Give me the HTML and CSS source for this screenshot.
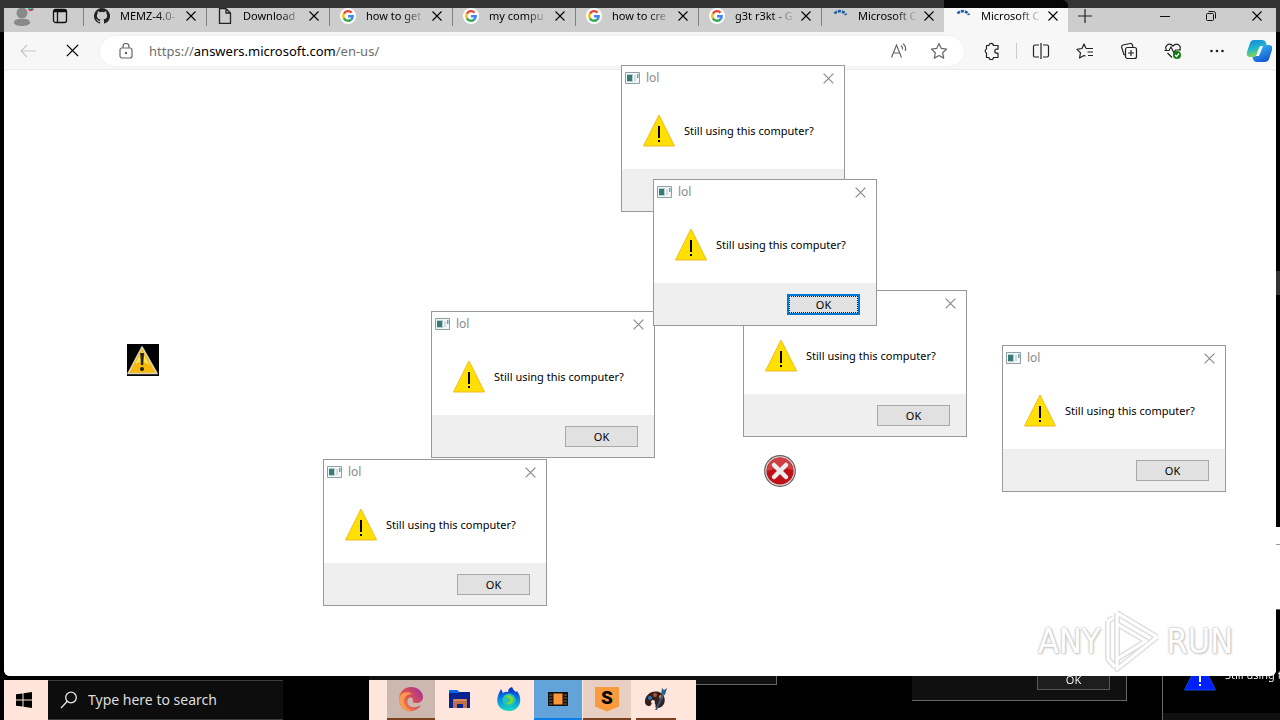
FILE: index.html
```html
<!DOCTYPE html>
<html lang="en">
<head>
<meta charset="utf-8">
<title>Desktop</title>
<link rel="stylesheet" href="styles.css">
</head>
<body>
<svg class="defs" aria-hidden="true">
  <symbol id="x" viewBox="0 0 12 12"><path d="M1.500 1.500l9 9M10.500 1.500l-9 9" fill="none" stroke="currentColor" stroke-width="1.100"/></symbol>
  <symbol id="google" viewBox="0 0 16 16"><circle cx="8" cy="8" r="8" fill="#fff"/><g fill="none" stroke-width="2.400"><path d="M11.500 4.600A4.700 4.700 0 0 0 3.900 5.700" stroke="#ea4335"/><path d="M3.900 5.700a4.700 4.700 0 0 0 0 4.600" stroke="#fbbc05"/><path d="M3.900 10.300a4.700 4.700 0 0 0 7.300 1.200" stroke="#34a853"/><path d="M11.200 11.500A4.700 4.700 0 0 0 12.700 8.200H8" stroke="#4285f4"/></g></symbol>
  <symbol id="spin" viewBox="0 0 16 16"><path d="M2.500 5.500a7 7 0 0 1 11.500 1.500" fill="none" stroke="#1a5fa5" stroke-width="2.600" stroke-dasharray="3 1"/></symbol>
  <symbol id="warn" viewBox="0 0 32 33"><path d="M16 1L31.500 32H.5z" fill="#ffe000" stroke="#f5b921"/><path d="M15 12h2v12h-2zM15 26h2v2h-2z" fill="#000"/></symbol>
  <symbol id="app" viewBox="0 0 15 12"><path d="M.5.5h14v11H.5z" fill="#f3f7f8" stroke="#8d9fa2"/><path d="M2 2h6v8H2z" fill="#b5d0cf"/><path d="M2 3h5v6H2z" fill="#377d77"/><path d="M9 3h2v6H9z" fill="#d3dce2"/><path d="M12 2h1.500v4H12z" fill="#62a89c"/></symbol>
</svg>
<div class="desktop">
  <section class="dialog ghost ghost-a" aria-hidden="true">
    <div class="caption"></div><div class="message"></div>
    <div class="actions"><button type="button" class="ok" tabindex="-1">OK</button></div>
  </section>
  <section class="dialog ghost ghost-b" aria-hidden="true">
    <div class="caption"></div>
    <div class="message"><svg class="warn"><use href="#warn"/></svg><p>Still using this computer?</p></div>
    <div class="actions"></div>
  </section>
  <div class="ghost-panel"></div>

  <main class="browser">
    <header class="tabs">
      <div class="profile">
        <svg width="22" height="24" viewBox="0 0 22 24"><circle cx="10" cy="5" r="5.500" fill="#898989"/><path d="M2 15c0-4 3-4 8-4s8 0 8 4c-1 4-15 4-16 0z" fill="#898989"/><circle cx="19" cy="0" r="3" fill="#21cdbb"/><path d="M16 1c1 3 4 3 5.500 0-2-1-3 1-5.500 0z" fill="#e03050"/></svg>
        <svg width="16" height="16" viewBox="0 0 16 16" fill="none" stroke="#111" stroke-width="1.300"><rect x="1.500" y="1.500" width="13" height="13" rx="2"/><path d="M1.500 3.500h13M5.500 4v10"/><path d="M2 2.500h12" stroke-width="2"/></svg>
      </div>
      <div class="tab"><svg class="fav" viewBox="0 0 16 16"><path fill="#222" d="M8 0a8 8 0 0 0-2.530 15.590c.4.070.55-.17.55-.38v-1.490c-2.230.48-2.700-.95-2.700-.95-.36-.92-.89-1.170-.89-1.170-.73-.5.050-.49.050-.49.810.060 1.230.83 1.230.83.720 1.230 1.880.87 2.340.67.070-.52.280-.87.510-1.070-1.780-.2-3.640-.89-3.640-3.950 0-.87.310-1.590.82-2.150-.08-.2-.36-1.020.080-2.120 0 0 .67-.21 2.200.82a7.600 7.600 0 0 1 4 0c1.530-1.040 2.200-.82 2.200-.82.440 1.100.160 1.920.080 2.120.510.560.820 1.270.820 2.150 0 3.070-1.870 3.750-3.650 3.950.290.250.540.730.540 1.480v2.190c0 .21.150.46.550.38A8 8 0 0 0 8 0z"/></svg><span>MEMZ-4.0-</span><button type="button" aria-label="Close tab"><svg><use href="#x"/></svg></button></div>
      <div class="tab"><svg class="fav" viewBox="0 0 16 16" fill="none" stroke="#222" stroke-width="1.300"><path d="M2.500.7H9L13.500 5v10.300h-11zM9 .7V5h4.500"/></svg><span>Download</span><button type="button" aria-label="Close tab"><svg><use href="#x"/></svg></button></div>
      <div class="tab"><svg class="fav"><use href="#google"/></svg><span>how to get</span><button type="button" aria-label="Close tab"><svg><use href="#x"/></svg></button></div>
      <div class="tab"><svg class="fav"><use href="#google"/></svg><span>my compu</span><button type="button" aria-label="Close tab"><svg><use href="#x"/></svg></button></div>
      <div class="tab"><svg class="fav"><use href="#google"/></svg><span>how to cre</span><button type="button" aria-label="Close tab"><svg><use href="#x"/></svg></button></div>
      <div class="tab"><svg class="fav"><use href="#google"/></svg><span>g3t r3kt - G</span><button type="button" aria-label="Close tab"><svg><use href="#x"/></svg></button></div>
      <div class="tab"><svg class="fav"><use href="#spin"/></svg><span>Microsoft C</span><button type="button" aria-label="Close tab"><svg><use href="#x"/></svg></button></div>
      <div class="tab active"><svg class="fav"><use href="#spin"/></svg><span>Microsoft C</span><button type="button" aria-label="Close tab"><svg><use href="#x"/></svg></button></div>
      <button type="button" class="new" aria-label="New tab"><svg width="14" height="14" viewBox="0 0 14 14"><path d="M7 0v14M0 7h14" stroke="#222" stroke-width="1.200"/></svg></button>
      <div class="wincontrols">
        <button type="button" aria-label="Minimize"><svg width="12" height="12"><path d="M1 6.500h10" stroke="#111"/></svg></button>
        <button type="button" aria-label="Restore"><svg width="12" height="12" fill="none" stroke="#111"><rect x="1.500" y="3.500" width="7" height="7" rx="1"/><path d="M3.500 1.500h5a2 2 0 0 1 2 2v5"/></svg></button>
        <button type="button" aria-label="Close"><svg width="12" height="12"><use href="#x"/></svg></button>
      </div>
    </header>
    <div class="toolbar">
      <button type="button" aria-label="Back"><svg width="18" height="16" viewBox="0 0 18 16" fill="none" stroke="#c8c8c8" stroke-width="1.200"><path d="M17 8H2M8 2L2 8l6 6"/></svg></button>
      <button type="button" aria-label="Stop"><svg width="15" height="15"><use href="#x"/></svg></button>
      <div class="address">
        <svg width="14" height="16" viewBox="0 0 14 16" fill="none" stroke="#666" stroke-width="1.200"><rect x="1" y="5" width="12" height="10" rx="2"/><path d="M4 5V3.500a3 3 0 0 1 6 0V5"/><circle cx="7" cy="10" r=".6" fill="#666"/></svg>
        <p class="url">https://<b>answers.microsoft.com</b>/en-us/</p>
        <button type="button" aria-label="Read aloud"><svg width="18" height="16" viewBox="0 0 18 16" fill="none" stroke="#666" stroke-width="1.200"><path d="M1.500 14.500L6.500 2l5 12.500M3.500 10h6M11 2.500q2 1.500 1.500 4M13 .8q3.500 2.500 2.300 7"/></svg></button>
        <button type="button" aria-label="Favorite"><svg width="18" height="18" viewBox="0 0 18 18" fill="none" stroke="#666" stroke-width="1.200" stroke-linejoin="round"><path d="M9 1.500l2.300 4.900 5.300.7-3.900 3.700 1 5.300L9 13.500l-4.700 2.600 1-5.300L1.400 7.100l5.300-.7z"/></svg></button>
      </div>
      <div class="tools">
        <button type="button" aria-label="Extensions"><svg width="18" height="18" viewBox="0 0 18 18" fill="none" stroke="#222" stroke-width="1.200" stroke-linejoin="round"><path d="M6 3.500a2.200 2.200 0 0 1 4.400 0H15v3.700h-1.200a2 2 0 0 0 0 4H15v4.300h-4.600a2.200 2.200 0 0 1-4.400 0H3.500V11a2.200 2.200 0 0 1 0-4V3.500z"/></svg></button>
        <span class="rule"></span>
        <button type="button" aria-label="Split screen"><svg width="18" height="18" viewBox="0 0 18 18" fill="none" stroke="#222" stroke-width="1.200"><path d="M7 3H3a1.500 1.500 0 0 0-1.500 1.500v9A1.500 1.500 0 0 0 3 15h4M11 3h4a1.500 1.500 0 0 1 1.500 1.500v9A1.500 1.500 0 0 1 15 15h-4M9 1v16"/></svg></button>
        <button type="button" aria-label="Favorites list"><svg width="18" height="18" viewBox="0 0 18 18" fill="none" stroke="#222" stroke-width="1.200" stroke-linejoin="round"><path d="M10 6.500h7M11.500 10H17M12 13.500h5M10 6.500L8 2 6 6.500l-5 .8 3.500 3.500-1 5.200L8 13.500l1.500.8"/></svg></button>
        <button type="button" aria-label="Collections"><svg width="18" height="18" viewBox="0 0 18 18" fill="none" stroke="#222" stroke-width="1.200"><rect x="5.500" y="5.500" width="11" height="11" rx="2"/><path d="M11 8v6M8 11h6M5 13l-1-.5L1.500 5A2 2 0 0 1 3 3l7-1.500A2 2 0 0 1 12.500 3l.5 2.500"/></svg></button>
        <button type="button" aria-label="Performance"><svg width="18" height="18" viewBox="0 0 18 18" fill="none" stroke="#222" stroke-width="1.200"><path d="M2.500 8C0 4 5 0 9 4c4-4 9 0 6.500 4M3.500 11L8 15.500M.5 8.500H5L7 5l3 6 1.500-3H17"/><circle cx="13" cy="13" r="4" fill="#107c10" stroke="none"/><path d="M11 13l1.500 1.500L15 11.500" stroke="#fff"/></svg></button>
        <button type="button" aria-label="Settings"><svg width="18" height="18" viewBox="0 0 18 18" fill="#222"><circle cx="3.500" cy="9" r="1.300"/><circle cx="9" cy="9" r="1.300"/><circle cx="14.500" cy="9" r="1.300"/></svg></button>
        <button type="button" aria-label="Copilot"><svg width="26" height="24" viewBox="0 0 26 24"><defs><linearGradient id="ca" x2=".3" y2="1"><stop stop-color="#1683d8"/><stop offset=".55" stop-color="#20b6cf"/><stop offset="1" stop-color="#8bd650"/></linearGradient><linearGradient id="cb" x2=".6" y2="1"><stop stop-color="#39c8f2"/><stop offset="1" stop-color="#1556d6"/></linearGradient></defs><path d="M18 23h-8q-2 0-3-3l-1-3h4q3 0 4-3l2-6q1-2 4-2h3q4 0 3 5l-3 9q-1 3-5 3z" fill="url(#cb)"/><path d="M8 1h8q3 0 4 3l1 3h-4q-3 0-4 3l-2 6q-1 2-4 2H4q-4 0-3-5l3-9q1-3 4-3z" fill="url(#ca)"/><path d="M15 7h2l-4 10h-3l3-8q1-2 2-2z" fill="#f2fafd"/></svg></button>
      </div>
    </div>
    <div class="page"></div>
  </main>

  <footer class="taskbar">
    <button type="button" class="start" aria-label="Start"><svg width="16" height="16" viewBox="0 0 16 16"><path d="M0 2.300L6.500 1.400V7.500H0zM7.500 1.200L16 0v7.500H7.500zM0 8.500h6.500v6.100L0 13.700zM7.500 8.500H16V16l-8.500-1.200z"/></svg></button>
    <label class="search"><svg width="18" height="18" viewBox="0 0 18 18" fill="none" stroke="#e8e8e8" stroke-width="1.300"><circle cx="11" cy="6.500" r="5.300"/><path d="M7.300 10.300L1 17"/></svg><input type="text" placeholder="Type here to search" aria-label="Type here to search"></label>
    <nav class="apps">
      <button type="button" class="app edge" aria-label="Edge"><svg width="26" height="26" viewBox="0 0 26 26"><defs><linearGradient id="ea" x1="1" x2="0" y1=".2" y2="1"><stop stop-color="#a92f94"/><stop offset=".5" stop-color="#df5550"/><stop offset="1" stop-color="#ff9b48"/></linearGradient></defs><path d="M1 13C1 6 6 1 13 1s12 5 12 10c0 4-3 6-7 6-3 0-4-1-3-3 0-2-2-3-4-2-3 2-2 8 3 9 4 1 7-1 9-2-3 5-9 7-13 6C4 24 1 19 1 13z" fill="url(#ea)"/><path d="M1 13c1-6 8-9 13-5-6 0-9 5-8 9s4 7 8 7C6 26 1 20 1 13z" fill="#f99a52"/></svg></button>
      <button type="button" class="app" aria-label="Explorer"><svg width="24" height="22" viewBox="0 0 24 22"><path d="M1 2h8l2 2h11v16H1z" fill="#08238f"/><path d="M1 2h8l2 2v1H1z" fill="#0768e8"/><path d="M5 20v-9h14v9h-4v-4H9v4z" fill="#bd704a"/><path d="M6 12h12" stroke="#efa16d"/></svg></button>
      <button type="button" class="app" aria-label="Firefox"><svg width="26" height="26" viewBox="0 0 26 26"><defs><linearGradient id="fa" y2="1" x2="0"><stop stop-color="#0825c7"/><stop offset=".5" stop-color="#0784e6"/><stop offset="1" stop-color="#16dfbd"/></linearGradient></defs><path d="M3 7l2-4 2 4q3-2 5-1 0-4 4-5 1 3 4 5l1-1c7 9 2 20-8 20C2 25-1 16 3 7z" fill="url(#fa)"/><circle cx="13" cy="14" r="6.500" fill="#26c4b1"/><path d="M9 11q3-3 6-1 4 2 2 6-3 4-7 1 4 0 4-3-1-3-5-3z" fill="#78d739"/></svg></button>
      <button type="button" class="app blue" aria-label="Process tool"><svg width="22" height="18" viewBox="0 0 22 18"><path d="M1 2h20v14H1z" fill="#111"/><path d="M2 5h18M2 8h18M2 11h18M2 14h18" stroke="#8b6040"/><path d="M6 3h10v12H6z" fill="#ff9638" stroke="#111"/></svg></button>
      <button type="button" class="app tan" aria-label="S"><span class="shield">S</span></button>
      <button type="button" class="app paint" aria-label="Paint"><svg width="26" height="26" viewBox="0 0 26 26"><path d="M2 17C1 8 11 3 18 7c6 4 5 15-4 15-3 0 0-4-3-5-3 0-3 4-6 3q-2 0-3-3z" fill="#35201b"/><circle cx="7" cy="12" r="2" fill="#2674bd"/><circle cx="12" cy="9" r="2" fill="#b45139"/><circle cx="18" cy="11" r="2" fill="#dd903d"/><circle cx="10" cy="16" r="2" fill="#ffe8dd"/><path d="M12 24l7-16 2 1-7 15z" fill="#315b85"/><path d="M18 8l1-6 2 2 3-2-2 7z" fill="#2b668e"/></svg></button>
    </nav>
  </footer>

  <svg class="cursor caution" viewBox="0 0 32 32"><path fill="#000" d="M0 0h32v32H0z"/><path d="M15 3L1 29.500h29z" fill="#f6b80c" stroke="#d8d3bd" stroke-width="1.600" stroke-linejoin="round"/><path d="M15 7L8 20q8-5 15 2z" fill="#ffe347"/><path d="M13.200 9h3.800l-.8 12h-2.200z" fill="#222"/><circle cx="15" cy="25" r="2" fill="#222"/></svg>
  <svg class="cursor stop" viewBox="0 0 32 32"><circle cx="16" cy="16" r="15.300" fill="#ddd" stroke="#665c5c" stroke-width="1.200"/><circle cx="16" cy="16" r="13.600" fill="#be1015"/><path d="M3 16a13 13 0 0 1 26-1q-13-4-26 1z" fill="#cf3f44"/><path d="M10 10l12 12M22 10L10 22" stroke="#ececec" stroke-width="4.500" stroke-linecap="round"/></svg>

  <div class="watermark"><span>ANY</span><svg width="58" height="64" viewBox="0 0 58 64" fill="none" stroke-linejoin="round"><g stroke="#dedede" stroke-width="6"><path d="M13 4v46M13 4l40 24M53 28L13 60 13 50 42 32 13 15M4 12v38l7 8M4 12l5-3"/></g><g stroke="#fff" stroke-width="3"><path d="M13 4v46M13 4l40 24M53 28L13 60 13 50 42 32 13 15M4 12v38l7 8M4 12l5-3"/></g></svg><span>RUN</span></div>

  <section class="dialog d1"><div class="caption"><svg><use href="#app"/></svg><h2>lol</h2><button type="button" aria-label="Close"><svg><use href="#x"/></svg></button></div><div class="message"><svg class="warn"><use href="#warn"/></svg><p>Still using this computer?</p></div><div class="actions"></div></section>
  <section class="dialog d2"><div class="caption"><svg><use href="#app"/></svg><h2>lol</h2><button type="button" aria-label="Close"><svg><use href="#x"/></svg></button></div><div class="message"><svg class="warn"><use href="#warn"/></svg><p>Still using this computer?</p></div><div class="actions"><button type="button" class="ok">OK</button></div></section>
  <section class="dialog d3"><div class="caption"><svg><use href="#app"/></svg><h2>lol</h2><button type="button" aria-label="Close"><svg><use href="#x"/></svg></button></div><div class="message"><svg class="warn"><use href="#warn"/></svg><p>Still using this computer?</p></div><div class="actions"><button type="button" class="ok">OK</button></div></section>
  <section class="dialog d4"><div class="caption"><svg><use href="#app"/></svg><h2>lol</h2><button type="button" aria-label="Close"><svg><use href="#x"/></svg></button></div><div class="message"><svg class="warn"><use href="#warn"/></svg><p>Still using this computer?</p></div><div class="actions"><button type="button" class="ok">OK</button></div></section>
  <section class="dialog d5"><div class="caption"><svg><use href="#app"/></svg><h2>lol</h2><button type="button" aria-label="Close"><svg><use href="#x"/></svg></button></div><div class="message"><svg class="warn"><use href="#warn"/></svg><p>Still using this computer?</p></div><div class="actions"><button type="button" class="ok">OK</button></div></section>
  <section class="dialog d6"><div class="caption"><svg><use href="#app"/></svg><h2>lol</h2><button type="button" aria-label="Close"><svg><use href="#x"/></svg></button></div><div class="message"><svg class="warn"><use href="#warn"/></svg><p>Still using this computer?</p></div><div class="actions"><button type="button" class="ok default">OK</button></div></section>
</div>
</body>
</html>
```

FILE: styles.css
```css
* { box-sizing: border-box; }
body { margin: 0; font: 12px/16px "Noto Sans", "Open Sans", sans-serif; color: #000; }
button { font: inherit; color: inherit; padding: 0; border: 0; background: none; display: grid; place-items: center; flex: none; }
p, h2 { margin: 0; font-weight: 400; }
svg { display: block; flex: none; }
.defs { position: absolute; width: 0; height: 0; }

.desktop {
  position: relative; isolation: isolate; overflow: hidden; height: 100vh;
  display: flex; flex-direction: column;
  background:
    linear-gradient(#000 271px, #333 271px, #333 295px, #000 295px, #000 527px, #fff 527px, #fff 544px, #999 544px, #999 545px, #fff 545px, #fff 610px, #000 610px) right / 4px 100% no-repeat,
    #000;
}

/* Browser */
.browser { flex: 1; min-height: 0; display: flex; flex-direction: column; position: relative; }
.tabs {
  display: flex; height: 32px; border: solid #333; border-width: 0 4px;
  background: linear-gradient(#333 8px, #cdcdcd 8px);
}
.profile { width: 79px; padding: 8px 0 0 8px; display: flex; gap: 18px; overflow: hidden; flex: none; }
.tab {
  flex: 0 1 123px; min-width: 0; padding: 0 9px 0 11px;
  display: flex; align-items: center; gap: 10px; position: relative;
  background: linear-gradient(#808080, #808080) left 8px / 1px 18px no-repeat;
}
.tab .fav { width: 16px; height: 16px; }
.tab span {
  flex: 1; white-space: nowrap; font-size: 11px; margin-right: -6px;
  mask-image: linear-gradient(90deg, #000 60%, transparent 98%);
}
.tab button svg { width: 12px; height: 12px; }
.tab.active { flex-basis: 124px; background: linear-gradient(#060606 8px, #f7f7f7 8px); border-radius: 0 6px 0 0; }
.new { width: 34px; }
.wincontrols { margin-left: auto; display: flex; }
.wincontrols button { width: 46px; }
.wincontrols button:nth-child(1) { padding-right: 8px; }
.wincontrols button:nth-child(2) { padding-right: 8px; }
.wincontrols button:last-child { width: 38px; }

.toolbar { display: flex; align-items: center; height: 38px; margin: 0 4px; padding-right: 5px; background: #f7f7f7; border-bottom: 1px solid #ececec; }
.toolbar > button { width: 44px; padding-right: 4px; }
.toolbar > button:first-child { width: 48px; padding: 0; }
.address {
  flex: 1; display: flex; align-items: center; height: 30px; margin-left: 4px; padding: 0 16px 0 19px;
  border-radius: 15px; background: #fff; box-shadow: 0 0 2px #e4e4e4;
}
.url { flex: 1; margin-left: 16px; font-size: 13px; line-height: 20px; color: #6e6e6e; }
.url b { font-weight: 400; color: #000; }
.address button + button { margin-left: 22px; }
.tools { display: flex; align-items: center; gap: 26px; margin-left: 19px; }
.rule { width: 1px; height: 16px; margin: 0 -11px 0 -11px; background: #ccc; }
.tools button:last-child { margin: 0 -1px 0 -6px; }
.page { flex: 1; margin: 0 4px; background: linear-gradient(#f4f4f4, #f4f4f4) top / 100% 6px no-repeat, #fff; border-radius: 0 0 6px 6px; display: grid; }
.page::before { content: ""; background: #fff; border-radius: 6px; }

/* Taskbar */
.taskbar { display: flex; height: 44px; padding: 4px 0 0 4px; position: relative; }
.start { width: 44px; padding-right: 4px; background: #ffe4da; }
.search { width: 235px; display: flex; align-items: center; padding-left: 12px; gap: 10px; background: #0d0d0d; border: solid #3c3c3c; border-width: 1px 0; }
.search input { flex: 1; min-width: 0; border: 0; padding: 0; background: none; color: #ddd; font: 14px/20px "Noto Sans", "Open Sans", sans-serif; }
.search input::placeholder { color: #ddd; opacity: 1; }
.apps { display: flex; gap: 1px; width: 327px; margin-left: 86px; padding-left: 18px; background: #ffe6dc; }
.app { width: 48px; border-bottom: 2px solid transparent; }
.app.edge { background: #cdb8b0; border-color: #7a421f; }
.app.blue { background: #62a3da; border-color: #0c80e8; }
.app.tan { background: #e8cfc4; border-color: #7a421f; }
.app.paint { width: 40px; margin-left: 4px; border-color: #7a421f; }
.shield {
  width: 24px; height: 25px; background: #f99b3d; clip-path: polygon(0 0, 100% 0, 100% 80%, 50% 100%, 0 80%);
  font: 900 19px/22px "Roboto", sans-serif; text-align: center;
}

/* Message boxes */
.dialog { position: absolute; width: 224px; border: 1px solid #999; background: #fff; font-size: 11px; }
.caption { display: flex; align-items: center; height: 24px; padding: 0 9px 0 3px; color: #8a8a8a; }
.caption svg { width: 15px; height: 12px; }
.caption h2 { flex: 1; margin-left: 6px; font-size: 12px; }
.caption button svg { width: 13px; height: 13px; }
.message { display: flex; align-items: center; gap: 9px; height: 79px; padding: 2px 0 0 21px; white-space: nowrap; }
.warn { width: 32px; height: 33px; }
.actions { display: flex; justify-content: flex-end; height: 42px; padding: 11px 16px 0; background: #efefef; }
.ok { width: 73px; height: 21px; border: 1px solid #a8a8a8; background: #e1e1e1; color: #000; }
.ok.default { border: 2px solid #0078d7; outline: 1px dotted #222; outline-offset: -3px; }
.d1 { left: 621px; top: 65px; }
.d2 { left: 431px; top: 311px; }
.d3 { left: 743px; top: 290px; }
.d4 { left: 1002px; top: 345px; }
.d5 { left: 323px; top: 459px; }
.d6 { left: 653px; top: 179px; }
.ghost { filter: invert(1); }
.ghost-a { left: 903px; top: 554px; clip-path: inset(0 0 0 9px); }
.ghost-b { left: 1162px; top: 609px; }
.ghost-panel { position: absolute; left: 369px; top: 640px; width: 408px; height: 45px; background: #101010; border: solid #666; border-width: 0 1px 1px 0; }

.cursor { position: absolute; width: 32px; height: 32px; }
.caution { left: 127px; top: 344px; }
.stop { left: 764px; top: 455px; }
.watermark {
  position: absolute; left: 1038px; top: 609px; display: flex; align-items: center; gap: 4px;
  font: 34px/64px "Liberation Sans Narrow", "DejaVu Sans Condensed", sans-serif; color: #fff;
  text-shadow: 0 0 2px #bbb, 0 0 3px #ccc, 1px 1px 2px #ccc;
}
```
